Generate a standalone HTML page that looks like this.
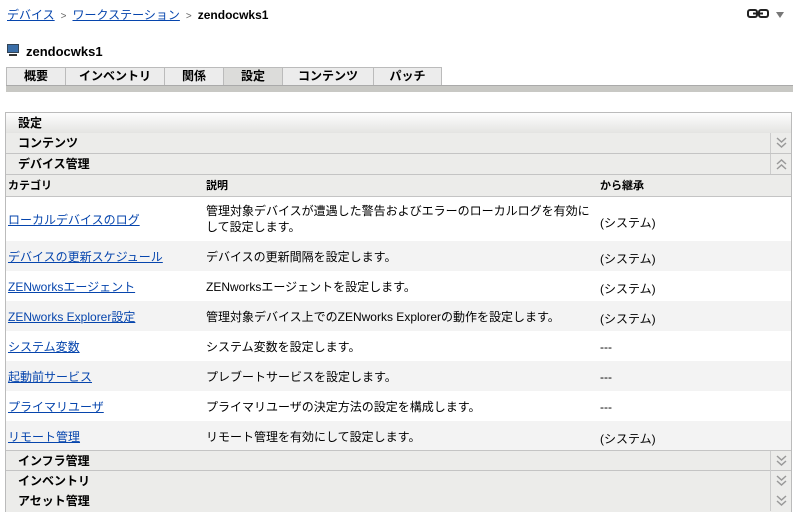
<!DOCTYPE html>
<html><head><meta charset="utf-8"><style>
*{margin:0;padding:0;box-sizing:border-box}
body{width:803px;height:526px;background:#fff;font-family:"Liberation Sans","Noto Sans CJK JP",sans-serif;font-size:12px;color:#000;position:relative;overflow:hidden}
a{color:#0645ad;text-decoration:underline}
.abs{position:absolute}
.crumb{left:7px;top:6px;font-size:12px}
.crumb b{font-weight:bold}
.crumb .sep{color:#666;margin:0 6px;font-size:10px}
.title{left:7px;top:44px;font-size:13px;font-weight:bold}
.tabs{left:6px;top:67px;height:19px;display:flex}
.tab{border:1px solid #bbb;border-bottom:none;background:#ececec;font-weight:bold;font-size:12px;text-align:center;line-height:17px;height:19px;margin-right:-1px}
.tab.sel{background:#dcdcda}
.bar{left:6px;top:85px;width:787px;height:7px;background:#c8c8c4;border-top:1px solid #aaa}
.box{left:5px;top:112px;width:787px;height:400px;border:1px solid #bbb}
.hdr{position:absolute;left:0;width:785px;height:21px;background:#ececea;border-bottom:1px solid #c4c4c4;font-weight:bold;font-size:12px;line-height:20px;padding-left:12px}
.hdr .ic{position:absolute;right:0;top:0;width:21px;height:20px;border-left:1px solid #ccc}
.hdr .ic svg{position:absolute;left:5px;top:4px}
.top{background:linear-gradient(#fdfdfd,#e4e4e2)}
.row{position:absolute;left:0;width:785px;font-size:12px}
.row .c1{position:absolute;left:2px}
.row .c2{position:absolute;left:200px}
.row .c3{position:absolute;left:594px}
</style></head><body>
<div class="abs crumb"><a>デバイス</a><span class="sep">&gt;</span><a>ワークステーション</a><span class="sep">&gt;</span><b>zendocwks1</b></div>
<svg class="abs" style="left:747px;top:9px" width="22" height="9"><rect x="1" y="1" width="9" height="7" rx="2" fill="none" stroke="#222" stroke-width="2"/><rect x="12" y="1" width="9" height="7" rx="2" fill="none" stroke="#222" stroke-width="2"/><line x1="6" y1="4.5" x2="16" y2="4.5" stroke="#222" stroke-width="2"/></svg>
<div class="abs" style="left:776px;top:12px;width:0;height:0;border-left:4px solid transparent;border-right:4px solid transparent;border-top:6px solid #777"></div>
<div class="abs" style="left:7px;top:44px;width:12px;height:9px;background:#3a6ea8;border:1px solid #345"></div>
<div class="abs" style="left:9px;top:54px;width:8px;height:2px;background:#333"></div>
<div class="abs title" style="left:26px">zendocwks1</div>
<div class="abs tabs">
<div class="tab" style="width:60px">概要</div>
<div class="tab" style="width:100px">インベントリ</div>
<div class="tab" style="width:60px">関係</div>
<div class="tab sel" style="width:60px">設定</div>
<div class="tab" style="width:92px">コンテンツ</div>
<div class="tab" style="width:69px">パッチ</div>
</div>
<div class="abs bar"></div>
<div class="abs box">
<div class="hdr top" style="top:0">設定</div>
<div class="hdr" style="top:20px">コンテンツ<span class="ic"><svg width="11" height="12"><path d="M1 1l4.5 4 4.5-4M1 6l4.5 4 4.5-4" fill="none" stroke="#999" stroke-width="1.5"/></svg></span></div>
<div class="hdr" style="top:41px">デバイス管理<span class="ic"><svg width="11" height="12"><path d="M1 6l4.5-4 4.5 4M1 11l4.5-4 4.5 4" fill="none" stroke="#999" stroke-width="1.5"/></svg></span></div>
<div class="hdr" style="top:62px;padding-left:2px;font-size:11px;height:22px;line-height:22px"><span>カテゴリ</span><span style="position:absolute;left:200px">説明</span><span style="position:absolute;left:594px">から継承</span></div>
<div class="row" style="top:84px;height:44px;background:#fff"><a class="c1" style="top:14px">ローカルデバイスのログ</a><span class="c2" style="top:6px;line-height:16px">管理対象デバイスが遭遇した警告およびエラーのローカルログを有効に<br>して設定します。</span><span class="c3" style="top:17px">(システム)</span></div>
<div class="row" style="top:128px;height:30px;background:#f3f3f3"><a class="c1" style="top:7px">デバイスの更新スケジュール</a><span class="c2" style="top:7px">デバイスの更新間隔を設定します。</span><span class="c3" style="top:9px">(システム)</span></div>
<div class="row" style="top:158px;height:30px"><a class="c1" style="top:7px">ZENworksエージェント</a><span class="c2" style="top:7px">ZENworksエージェントを設定します。</span><span class="c3" style="top:9px">(システム)</span></div>
<div class="row" style="top:188px;height:30px;background:#f3f3f3"><a class="c1" style="top:7px">ZENworks Explorer設定</a><span class="c2" style="top:7px">管理対象デバイス上でのZENworks Explorerの動作を設定します。</span><span class="c3" style="top:9px">(システム)</span></div>
<div class="row" style="top:218px;height:30px"><a class="c1" style="top:7px">システム変数</a><span class="c2" style="top:7px">システム変数を設定します。</span><span class="c3" style="top:9px">---</span></div>
<div class="row" style="top:248px;height:30px;background:#f3f3f3"><a class="c1" style="top:7px">起動前サービス</a><span class="c2" style="top:7px">プレブートサービスを設定します。</span><span class="c3" style="top:9px">---</span></div>
<div class="row" style="top:278px;height:30px"><a class="c1" style="top:7px">プライマリユーザ</a><span class="c2" style="top:7px">プライマリユーザの決定方法の設定を構成します。</span><span class="c3" style="top:9px">---</span></div>
<div class="row" style="top:308px;height:30px;background:#f3f3f3"><a class="c1" style="top:7px">リモート管理</a><span class="c2" style="top:7px">リモート管理を有効にして設定します。</span><span class="c3" style="top:9px">(システム)</span></div>
<div class="hdr" style="top:337px;border-top:1px solid #c4c4c4">インフラ管理<span class="ic"><svg width="11" height="12"><path d="M1 1l4.5 4 4.5-4M1 6l4.5 4 4.5-4" fill="none" stroke="#999" stroke-width="1.5"/></svg></span></div>
<div class="hdr" style="top:358px">インベントリ<span class="ic"><svg width="11" height="12"><path d="M1 1l4.5 4 4.5-4M1 6l4.5 4 4.5-4" fill="none" stroke="#999" stroke-width="1.5"/></svg></span></div>
<div class="hdr" style="top:378px;border-bottom:none">アセット管理<span class="ic"><svg width="11" height="12"><path d="M1 1l4.5 4 4.5-4M1 6l4.5 4 4.5-4" fill="none" stroke="#999" stroke-width="1.5"/></svg></span></div>
</div>
</body></html>
